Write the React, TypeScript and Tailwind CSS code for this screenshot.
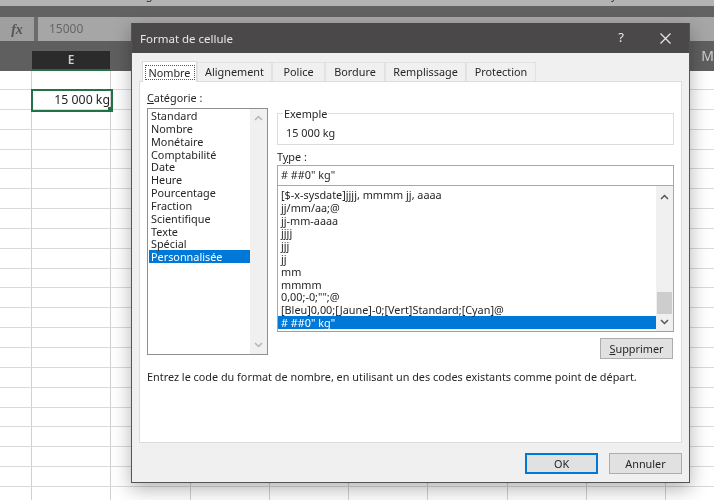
const categories = [
  "Standard",
  "Nombre",
  "Monétaire",
  "Comptabilité",
  "Date",
  "Heure",
  "Pourcentage",
  "Fraction",
  "Scientifique",
  "Texte",
  "Spécial",
  "Personnalisée",
];

const formats = [
  "[$-x-sysdate]jjjj, mmmm jj, aaaa",
  "jj/mm/aa;@",
  "jj-mm-aaaa",
  "jjjj",
  "jjj",
  "jj",
  "mm",
  "mmmm",
  '0,00;-0;"";@',
  "[Bleu]0,00;[Jaune]-0;[Vert]Standard;[Cyan]@",
  '# ##0" kg"',
];

const tabs = [
  { label: "Alignement", width: "w-[75px]" },
  { label: "Police", width: "w-[53px]" },
  { label: "Bordure", width: "w-[60px]" },
  { label: "Remplissage", width: "w-[81px]" },
  { label: "Protection", width: "w-[70px]" },
];

const rows = Array.from({ length: 22 }, (_, i) => i);
const cols = Array.from({ length: 9 }, (_, i) => i);

function Chevron({ up, dark }: { up?: boolean; dark?: boolean }) {
  return (
    <svg width="9" height="6" viewBox="0 0 9 6" fill="none">
      <path
        d={up ? "M1 5 L4.5 1.5 L8 5" : "M1 1 L4.5 4.5 L8 1"}
        stroke={dark ? "#555555" : "#b5b5b5"}
        strokeWidth="1.5"
      />
    </svg>
  );
}

function Sheet() {
  return (
    <div className="flex flex-col h-full">
      <div className="h-[6px] bg-[#b3b3b3] overflow-hidden flex text-[11px] leading-[14px] text-[#333] shrink-0">
        <span className="-mt-[12px] ml-[133px] w-[212px]">Alignement</span>
        <span className="-mt-[12px] w-[47px]">5</span>
        <span className="-mt-[12px] w-[89px]">Nombre</span>
        <span className="-mt-[12px] w-[120px]">5</span>
        <span className="-mt-[12px]">Styles</span>
      </div>
      <div className="h-[11px] bg-[#626262] shrink-0" />
      <div className="h-[24px] bg-[#6c6c6c] flex shrink-0">
        <div className="w-[34px] bg-[#9f9f9f] flex items-center justify-center font-['Liberation_Serif',serif] italic text-[14px] font-bold text-[#555]">
          fx
        </div>
        <div className="ml-[4px] flex-1 bg-[#a6a6a6] pl-[11px] flex items-center text-[12px] text-[#666]">
          15000
        </div>
      </div>
      <div className="h-[30px] bg-[#5f5f5f] flex items-end text-[12px] text-[#cfcfcf] shrink-0">
        <div className="w-[32px]" />
        <div className="w-[79px] h-[20px] bg-[#2b2b2b] border-b-2 border-[#217346] text-center leading-[18px] font-semibold">
          E
        </div>
        <div className="ml-[591px] text-[14px] leading-[24px] self-center">M</div>
      </div>
      <div className="flex-1 bg-white overflow-hidden">
        {rows.map((r) => (
          <div key={r} className={`flex border-b border-[#d9d9d9] ${r === 0 ? "h-[19px]" : "h-[19.85px]"}`}>
            <div className="w-[32px] shrink-0 border-r border-[#d0d0d0]" />
            {cols.map((c) => (
              <div key={c} className="w-[79.25px] shrink-0 border-r border-[#d0d0d0] relative">
                {r === 1 && c === 0 && (
                  <div className="absolute -left-[1px] -top-[1px] w-[82px] h-[23px] border-2 border-[#217346] flex items-center justify-end pr-[1px] text-[12.3px] text-[#222] z-10">
                    15 000 kg
                    <div className="absolute -right-[2px] -bottom-[2px] w-[5px] h-[5px] bg-[#217346]" />
                  </div>
                )}
              </div>
            ))}
          </div>
        ))}
      </div>
    </div>
  );
}

function Dialog() {
  return (
    <div className="absolute left-[131px] top-[23px] w-[559px] h-[460px] bg-[#f0f0f0] border border-[#555] border-t-0 shadow-[0_6px_18px_rgba(0,0,0,0.3)] flex flex-col text-[10.85px] text-[#262626]">
      <div className="h-[30px] bg-[#4a4848] flex items-center text-[#e8e8e8] shrink-0">
        <span className="ml-[8px] pt-[1px] text-[11.5px] flex-1">Format de cellule</span>
        <span className="text-[13px] mr-[36px]">?</span>
        <svg width="11" height="11" viewBox="0 0 11 11" className="mr-[18px]">
          <path d="M0.5 0.5 L10.5 10.5 M10.5 0.5 L0.5 10.5" stroke="#e8e8e8" strokeWidth="1.2" />
        </svg>
      </div>

      <div className="flex h-[28px] items-end pl-[10px] shrink-0">
        <div className="w-[55px] h-[21px] bg-white border border-b-0 border-[#dcdcdc] flex items-center justify-center -mb-px z-10 relative">
          <span className="border border-dotted border-[#555] px-[3px] leading-[13px]">Nombre</span>
        </div>
        {tabs.map((t) => (
          <div
            key={t.label}
            className={`${t.width} h-[19px] bg-[#f0f0f0] border border-b-0 border-[#e2e2e2] flex items-center justify-center`}
          >
            {t.label}
          </div>
        ))}
      </div>

      <div className="ml-[7px] w-[543px] h-[362px] bg-white border border-[#dcdcdc] px-[7px] shrink-0">
        <div className="flex gap-[9px]">
          <div className="w-[121px] pt-[9px]">
            <div className="h-[14px] leading-[14px]">
              <span className="underline">C</span>atégorie :
            </div>
            <div className="mt-[3px] h-[247px] border border-[#8f8f8f] flex">
              <div className="w-[101px] ml-[1px] shrink-0">
                {categories.map((c) => (
                  <div
                    key={c}
                    className={`h-[12.85px] leading-[13px] pl-[2px] ${
                      c === "Personnalisée" ? "bg-[#0078d7] text-white" : ""
                    }`}
                  >
                    {c}
                  </div>
                ))}
              </div>
              <div className="flex-1 bg-[#f0f0f0] flex flex-col items-center justify-between py-[6px]">
                <Chevron up />
                <Chevron />
              </div>
            </div>
          </div>

          <div className="w-[397px] pt-[23px]">
            <fieldset className="border border-[#dcdcdc] h-[40px]">
              <legend className="ml-[5px] px-[1px] pt-[2px] leading-[14px]">Exemple</legend>
              <div className="pt-[5px] pl-[8px] leading-[14px]">15 000 kg</div>
            </fieldset>
            <div className="mt-[5px] h-[14px] leading-[14px]">
              T<span className="underline">y</span>pe :
            </div>
            <div className="mt-[1px] h-[21px] border border-[#a8a8a8] pl-[3px] leading-[18px]">
              # ##0" kg"
            </div>
            <div className="-mt-px h-[147px] border border-[#a8a8a8] border-b-[#7aa7c7] flex">
              <div className="w-[378px] pt-[2px] shrink-0">
                {formats.map((f, i) => (
                  <div
                    key={f}
                    className={`h-[12.8px] leading-[13px] pl-[3px] ${
                      i === formats.length - 1 ? "bg-[#0078d7] text-white" : ""
                    }`}
                  >
                    {f}
                  </div>
                ))}
              </div>
              <div className="flex-1 bg-[#f0f0f0] flex flex-col items-center pt-[8px] pb-[6px]">
                <Chevron up dark />
                <div className="mt-[92px] w-[15px] h-[22px] bg-[#cdcdcd]" />
                <div className="mt-auto">
                  <Chevron dark />
                </div>
              </div>
            </div>
            <div className="flex justify-end mt-[6px] pr-[1px]">
              <div className="w-[73px] h-[21px] bg-[#e1e1e1] border border-[#adadad] text-center leading-[19px]">
                <span className="underline">S</span>upprimer
              </div>
            </div>
          </div>
        </div>
        <p className="mt-[11px] leading-[14px]">
          Entrez le code du format de nombre, en utilisant un des codes existants comme point de départ.
        </p>
      </div>

      <div className="flex justify-end gap-[11px] pr-[7px] mt-[10px]">
        <div className="w-[73px] h-[21px] bg-[#e1e1e1] border-2 border-[#0078d7] text-center leading-[17px]">OK</div>
        <div className="w-[73px] h-[21px] bg-[#e1e1e1] border border-[#adadad] text-center leading-[19px]">Annuler</div>
      </div>
    </div>
  );
}

export default function App() {
  return (
    <div className="relative w-[714px] h-[500px] overflow-hidden bg-white font-['Noto_Sans',sans-serif] blur-[0.3px]">
      <Sheet />
      <div className="absolute left-[131px] top-[17px] w-[559px] h-[6px] bg-[#a9a9a9]" />
      <Dialog />
    </div>
  );
}
